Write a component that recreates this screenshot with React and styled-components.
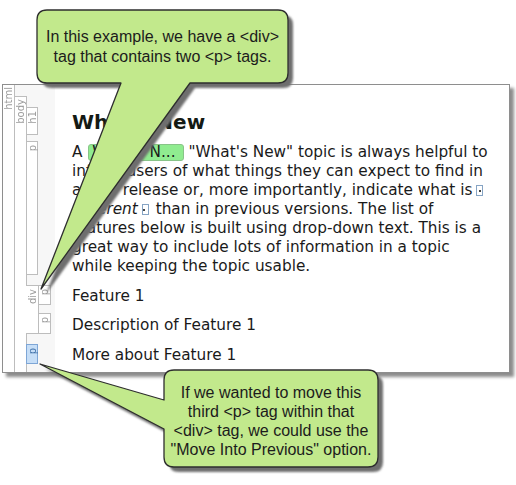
import React from 'react'
import styled, { createGlobalStyle } from 'styled-components'

const GlobalStyle = createGlobalStyle`
  html, body {
    margin: 0;
    padding: 0;
    background: #ffffff;
  }
`

const Page = styled.div`
  position: relative;
  width: 516px;
  height: 485px;
  box-sizing: border-box;
  padding: 84px 0 0 2px;
  overflow: hidden;
  background: #ffffff;
`

const EditorWindow = styled.div`
  width: 508px;
  height: 289px;
  box-sizing: border-box;
  border: 1px solid #8e8e8e;
  background: #ffffff;
  box-shadow: 4px 4px 3px rgba(0, 0, 0, 0.45);
  display: flex;
  overflow: hidden;
`

const StructurePane = styled.div`
  width: 52px;
  flex: none;
  display: flex;
  background: #f7f7f7;
`

const TagBox = styled.div`
  display: flex;
  align-items: stretch;
  margin-top: ${p => p.$top || 0}px;
  height: ${p => (p.$h ? `${p.$h}px` : 'auto')};
  flex: ${p => (p.$grow ? 1 : 'none')};
`

const TagLabel = styled.div`
  width: ${p => p.$w || 11}px;
  flex: none;
  margin-left: ${p => p.$ml || 0}px;
  background: #ffffff;
  border-right: 1px solid #bdbdbd;
  border-top: ${p => (p.$boxed || p.$capped ? '1px solid #bdbdbd' : 'none')};
  border-bottom: ${p => (p.$boxed ? '1px solid #bdbdbd' : 'none')};
  display: flex;
  justify-content: center;
  padding-top: ${p => p.$pt || 2}px;
  box-sizing: content-box;
  font-family: "DejaVu Sans", sans-serif;
  font-size: 10px;
  line-height: 11px;
  color: #9c9c9c;

  span {
    writing-mode: vertical-rl;
    transform: rotate(180deg);
    height: fit-content;
  }
`

const TagChildren = styled.div`
  display: flex;
  flex-direction: column;
  flex: 1;
`

const LeafTag = styled.div`
  width: 12px;
  height: ${p => p.$h}px;
  margin-top: ${p => p.$top || 0}px;
  margin-left: ${p => (p.$inner ? 0 : -1)}px;
  box-sizing: border-box;
  border: 1px solid ${p => (p.$selected ? '#7ea6d6' : '#bdbdbd')};
  border-left: ${p => (p.$inner ? 'none' : undefined)};
  background: ${p => (p.$selected ? '#c6def7' : '#ffffff')};
  color: ${p => (p.$selected ? '#3f70a8' : '#9c9c9c')};
  display: flex;
  justify-content: center;
  padding-top: 3px;
  font-family: "DejaVu Sans", sans-serif;
  font-size: 10px;
  line-height: 11px;

  span {
    writing-mode: vertical-rl;
    transform: rotate(180deg);
    height: fit-content;
  }
`

const ContentPane = styled.div`
  flex: 1;
  padding-left: 17px;
  display: flex;
  flex-direction: column;
  font-family: "DejaVu Sans", Verdana, sans-serif;
  color: #1a1a1a;
`

const Heading = styled.h1`
  margin: 24px 0 0;
  height: 27px;
  font-size: 20px;
  line-height: 27px;
  font-weight: bold;
  color: #141a14;
`

const Paragraph = styled.p`
  margin: ${p => p.$top || 0}px 0 0;
  height: ${p => p.$h}px;
  font-size: 15.3px;
  line-height: ${p => p.$lh || 19}px;
  white-space: nowrap;
`

const DropDownHead = styled.span`
  display: inline-block;
  padding: 0 7px 0 3px;
  margin-left: 1px;
  line-height: 15px;
  border: 1px solid #88c488;
  border-radius: 3px;
  background: #90ec90;
`

const Marker = styled.span`
  display: inline-block;
  position: relative;
  width: 5px;
  height: 9px;
  margin: 0 2px 0 4px;
  vertical-align: -1px;
  border: 1px solid #86a4c4;

  &::after {
    content: '';
    position: absolute;
    top: 4px;
    left: ${p => (p.$end ? 0 : 2)}px;
    width: 2px;
    height: 2px;
    background: #444;
  }
`

const Callouts = styled.svg`
  position: absolute;
  left: 0;
  top: 0;
  width: 516px;
  height: 485px;
  pointer-events: none;
`

const CalloutText = styled.div`
  position: absolute;
  left: ${p => p.$x}px;
  top: ${p => p.$y}px;
  width: ${p => p.$w}px;
  height: ${p => p.$h}px;
  box-sizing: border-box;
  padding-top: ${p => p.$pt || 0}px;
  display: flex;
  align-items: center;
  justify-content: center;
  text-align: center;
  font-family: "Liberation Sans", Arial, sans-serif;
  font-size: 16px;
  line-height: ${p => p.$lh}px;
  color: #1c1c1c;
`

const topCallout =
  'M47 10 H278 Q288 10 288 20 V73 Q288 83 278 83 H190 L41 289 L121 83 H47 Q37 83 37 73 V20 Q37 10 47 10 Z'
const bottomCallout =
  'M174 370 H368 Q378 370 378 380 V457 Q378 467 368 467 H174 Q164 467 164 457 V429 L40 364 L164 400 V380 Q164 370 174 370 Z'

function Callout({ d }) {
  return (
    <>
      <path d={d} fill="#6e6e6e" transform="translate(5 5)" filter="url(#soft)" />
      <path d={d} fill="#c2e98c" stroke="#2e2e2e" strokeWidth="1.3" strokeLinejoin="round" />
    </>
  )
}

export default function App() {
  return (
    <Page>
      <GlobalStyle />
      <EditorWindow>
        <StructurePane>
          <TagBox $grow>
            <TagLabel><span>html</span></TagLabel>
            <TagChildren>
              <TagBox $top={11} $grow>
                <TagLabel $capped><span>body</span></TagLabel>
                <TagChildren>
                  <LeafTag $h={28} $top={11}><span>h1</span></LeafTag>
                  <LeafTag $h={134} $top={6}><span>p</span></LeafTag>
                  <TagBox $top={10} $h={49}>
                    <TagLabel $boxed $ml={-1} $w={12} $pt={3}><span>div</span></TagLabel>
                    <TagChildren>
                      <LeafTag $inner $h={20}><span>p</span></LeafTag>
                      <LeafTag $inner $h={21} $top={8}><span>p</span></LeafTag>
                    </TagChildren>
                  </TagBox>
                  <LeafTag $selected $h={20} $top={10}><span>p</span></LeafTag>
                </TagChildren>
              </TagBox>
            </TagChildren>
          </TagBox>
        </StructurePane>

        <ContentPane>
          <Heading>What's New</Heading>
          <Paragraph $top={7} $h={134}>
            A <DropDownHead>What's N...</DropDownHead> "What's New" topic is always helpful to<br />
            inform users of what things they can expect to find in<br />
            a new release or, more importantly, indicate what is<Marker /><br />
            <em>different</em><Marker $end /> than in previous versions. The list of<br />
            features below is built using drop-down text. This is a<br />
            great way to include lots of information in a topic<br />
            while keeping the topic usable.
          </Paragraph>
          <Paragraph $top={10} $h={19}>Feature 1</Paragraph>
          <Paragraph $top={9} $h={20} $lh={20}>Description of Feature 1</Paragraph>
          <Paragraph $top={11} $h={19}>More about Feature 1</Paragraph>
        </ContentPane>
      </EditorWindow>

      <Callouts viewBox="0 0 516 485">
        <defs>
          <filter id="soft" x="-10%" y="-10%" width="120%" height="120%">
            <feGaussianBlur stdDeviation="1.2" />
          </filter>
        </defs>
        <Callout d={topCallout} />
        <Callout d={bottomCallout} />
      </Callouts>

      <CalloutText $x={37} $y={10} $w={251} $h={73} $lh={20}>
        In this example, we have a &lt;div&gt;<br />
        tag that contains two &lt;p&gt; tags.
      </CalloutText>
      <CalloutText $x={164} $y={370} $w={214} $h={97} $lh={19} $pt={5}>
        If we wanted to move this<br />
        third &lt;p&gt; tag within that<br />
        &lt;div&gt; tag, we could use the<br />
        "Move Into Previous" option.
      </CalloutText>
    </Page>
  )
}
